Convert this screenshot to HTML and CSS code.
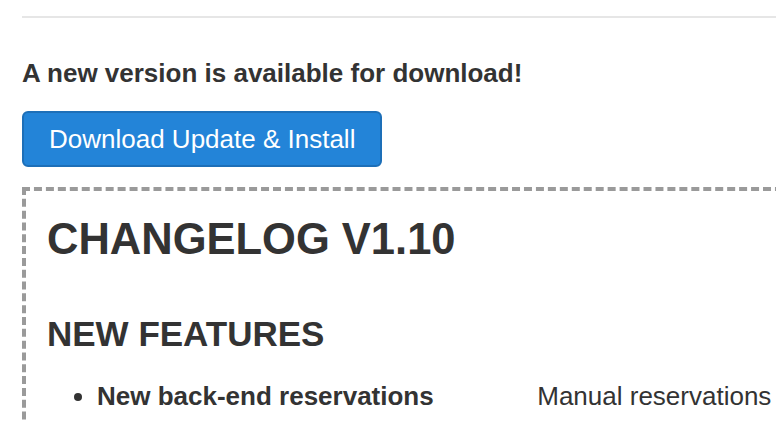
FILE: index.html
```html
<!DOCTYPE html>
<html lang="en">
<head>
    <meta charset="UTF-8">
    <meta name="viewport" content="width=device-width, initial-scale=1.0">
    <title>Update</title>
    <link rel="stylesheet" href="styles.css">
</head>
<body>
    <div class="page">
        <hr class="rule">
        <h4 class="notice">A new version is available for download!</h4>
        <button class="btn-update">Download Update &amp; Install</button>

        <div class="changelog">
            <h1>CHANGELOG V1.10</h1>
            <h2>NEW FEATURES</h2>
            <ul>
                <li>
                    <span class="feature">New back-end reservations</span>
                    <span class="desc">Manual reservations</span>
                </li>
            </ul>
        </div>
    </div>
</body>
</html>
```

FILE: styles.css
```css
html, body {
    margin: 0;
    overflow: hidden;
}
body {
    font-family: "Liberation Sans", Arial, Helvetica, sans-serif;
    font-size: 26px;
    line-height: 30px;
    color: #333;
    background: #fff;
}
.page {
    width: 1000px;
    padding-left: 22px;
}
.rule {
    margin: 16px 0 0;
    border: none;
    height: 2px;
    background: #e6e6e6;
}
.notice {
    margin: 40px 0 0;
    font-size: 26px;
    font-weight: bold;
}
.btn-update {
    display: block;
    margin-top: 23px;
    padding: 11px 25px;
    font-family: inherit;
    font-size: 26px;
    line-height: 30px;
    color: #fff;
    background: #2384d8;
    border: 2px solid #1d6fb8;
    border-radius: 6px;
    cursor: pointer;
}
.changelog {
    margin-top: 20px;
    padding: 0 21px 40px;
    border: 4px dashed #9a9a9a;
}
.changelog h1 {
    margin: 23px 0 0;
    font-size: 43.5px;
    line-height: 50px;
}
.changelog h2 {
    margin: 50px 0 0;
    font-size: 35px;
    line-height: 40px;
}
.changelog ul {
    margin: 27px 0 0;
    padding-left: 50px;
}
.feature {
    display: inline-block;
    width: 433px;
    font-weight: bold;
}
```
